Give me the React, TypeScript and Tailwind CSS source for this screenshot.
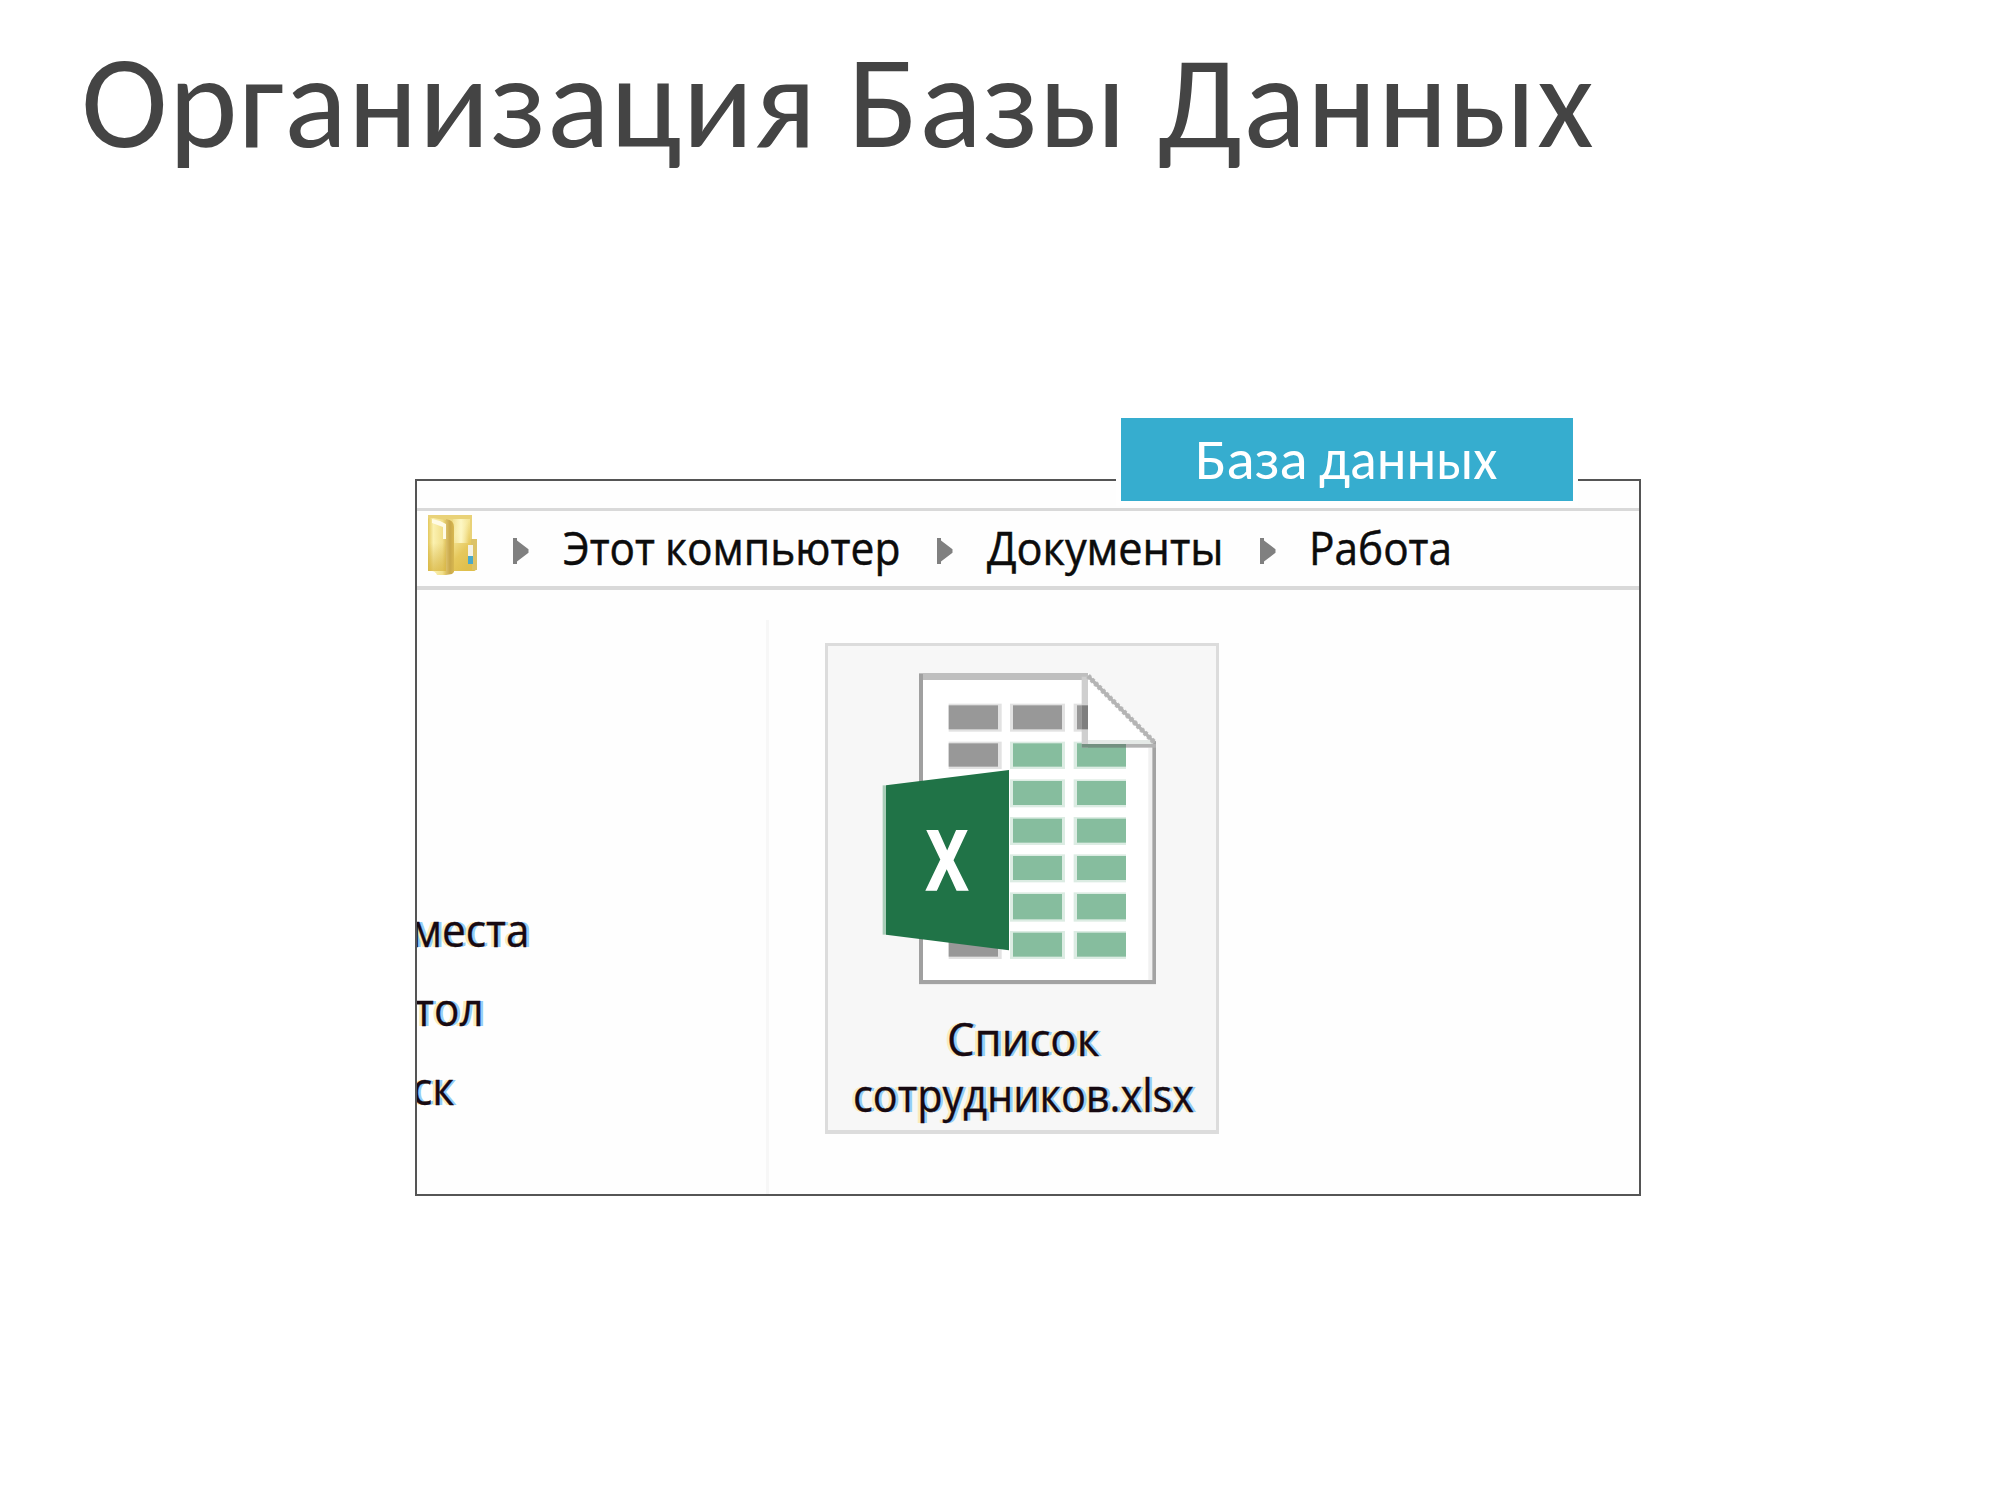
const fringe =
  "[text-shadow:-3px_0_0_#fcebbb,3px_0_0_#93cdf8] text-[#170a12] [-webkit-text-stroke:0.4px_#170a12]";

function Chevron() {
  return (
    <svg className="mt-[27px] h-[26px] w-4 shrink-0" viewBox="0 0 16 26">
      <path d="M0 0H4V2.500L15.500 11.300V14.700L4 23.500V26H0Z" fill="#808080" />
    </svg>
  );
}

function FolderIcon() {
  return (
    <svg className="ml-[11px] mt-1 h-[60px] w-[49px] shrink-0" viewBox="0 0 49 60">
      <defs>
        <linearGradient id="back" x1="0" y1="0" x2="0.6" y2="1">
          <stop offset="0" stopColor="#ecd67c" />
          <stop offset="0.35" stopColor="#f5e698" />
          <stop offset="0.7" stopColor="#e6c85c" />
          <stop offset="1" stopColor="#dfbf4c" />
        </linearGradient>
        <linearGradient id="front" x1="0" y1="0" x2="1" y2="0">
          <stop offset="0" stopColor="#e3c75c" />
          <stop offset="0.3" stopColor="#fbf1b0" />
          <stop offset="0.8" stopColor="#f2e08c" />
          <stop offset="1" stopColor="#dfc360" />
        </linearGradient>
        <linearGradient id="shade" x1="0" y1="0" x2="0" y2="1">
          <stop offset="0" stopColor="#c9a22e" stopOpacity="0" />
          <stop offset="1" stopColor="#d6b23c" stopOpacity="0.7" />
        </linearGradient>
        <linearGradient id="spine" x1="0" y1="0" x2="1" y2="0">
          <stop offset="0" stopColor="#dcc06a" />
          <stop offset="0.5" stopColor="#c9a84a" />
          <stop offset="1" stopColor="#d8b850" />
        </linearGradient>
        <linearGradient id="glow" x1="0" y1="0" x2="1" y2="0">
          <stop offset="0" stopColor="#fdf7c4" stopOpacity="0.2" />
          <stop offset="0.5" stopColor="#fdf7c4" />
          <stop offset="1" stopColor="#fdf7c4" stopOpacity="0" />
        </linearGradient>
      </defs>
      <path d="M0 0H44V56H0Z" fill="#e9d278" />
      <path d="M19 4H42V24H48V54Q48 56 45 56H19Z" fill="url(#back)" />
      <rect x="25" y="4" width="16" height="24" fill="url(#glow)" />
      <path d="M43 24H49V55H44V31H43Z" fill="#dcc267" />
      <path d="M0 4Q1 2 4 3L18 5V60H9Q8 56 0 55Z" fill="url(#front)" />
      <path d="M4 4L12 6L18 9V24H15V12L4 8Z" fill="#fffbe6" />
      <path d="M18 4Q26 5 26 12V57L24 59L18 60Z" fill="url(#spine)" />
      <rect x="0" y="28" width="18" height="28" fill="url(#shade)" />
      <rect x="40" y="30" width="5" height="11" fill="#f4f2e6" />
      <rect x="40" y="41" width="5" height="8" fill="#4aa9c9" />
    </svg>
  );
}

const rows = [
  { y: 226, h: 72, first: "#989898", rest: "#989898" },
  { y: 340, h: 70, first: "#989898", rest: "#86bd9e" },
  { y: 453, h: 72, first: "#989898", rest: "#86bd9e" },
  { y: 566, h: 72, first: "#989898", rest: "#86bd9e" },
  { y: 678, h: 72, first: "#989898", rest: "#86bd9e" },
  { y: 792, h: 76, first: "#989898", rest: "#86bd9e" },
  { y: 908, h: 72, first: "#989898", rest: "#86bd9e" },
];

function SpreadsheetIcon() {
  return (
    <svg className="ml-[54px] mt-[27px] block h-[312px] w-[274px]" viewBox="216 129 822 936">
      <rect x="327" y="1056" width="711" height="9" fill="#ececec" />
      <path d="M327 129H834L1038 333V1061H327Z" fill="#fff" />
      {rows.map((r, i) => (
        <g key={r.y}>
          <g opacity="0.28">
            <rect x="416" y={r.y - 5} width="159" height={r.h + 12} fill={r.first} />
            <rect x="600" y={r.y - 5} width="165" height={r.h + 12} fill={r.rest} />
            <rect x="791" y={r.y - 5} width={i === 0 ? 43 : 157} height={r.h + 12} fill={r.rest} />
          </g>
          <rect x="416" y={r.y} width="148" height={r.h} fill={r.first} />
          <rect x="609" y={r.y} width="147" height={r.h} fill={r.rest} />
          <rect x="801" y={r.y} width={i === 0 ? 33 : 147} height={r.h} fill={r.rest} />
        </g>
      ))}
      <rect x="1015" y="353" width="12" height="697" fill="#f1f1f1" />
      <path d="M834 129L1038 333V342H834Z" fill="#fff" />
      <rect x="327" y="129" width="507" height="21" fill="#bfbfbf" />
      <rect x="327" y="132" width="12" height="929" fill="#a0a0a0" />
      <rect x="327" y="1050" width="711" height="12" fill="#a3a3a3" />
      <rect x="1027" y="333" width="11" height="728" fill="#a3a3a3" />
      <rect x="815" y="140" width="19" height="213" fill="#cfcfcf" />
      <rect x="815" y="226" width="19" height="72" fill="#7f7f7f" />
      <rect x="834" y="330" width="193" height="12" fill="#e4e9e6" />
      <rect x="815" y="342" width="133" height="11" fill="#739080" />
      <rect x="948" y="342" width="90" height="11" fill="#b3b3b3" />
      <path d="M834 138L1034 338" stroke="#bcbcbc" strokeWidth="16" strokeDasharray="9 6" />
      <path d="M834 138L1034 338" stroke="#b4b4b4" strokeWidth="10" />
      <rect x="218" y="466" width="11" height="448" fill="#a9cdb8" />
      <path d="M228 466L597 420V961L228 914Z" fill="#207347" />
      <text
        transform="translate(411 781) scale(0.74 1)"
        textAnchor="middle"
        fontSize="250"
        fontWeight="700"
        fontFamily="Open Sans, sans-serif"
        fill="#fff"
        stroke="#fff"
        strokeWidth="5"
      >
        X
      </text>
    </svg>
  );
}

export default function App() {
  return (
    <main className="h-[1500px] w-[2000px] overflow-hidden bg-white">
      <h1 className="h-[167px] whitespace-nowrap pl-[81px] pt-[37px] font-['Carlito','Lato',sans-serif] text-[131px] leading-none tracking-[0.93px] text-[#444444]">
        Организация Базы Данных
      </h1>

      <section className="relative ml-[415px] mt-[312px] flex h-[717px] w-[1226px] flex-col border-2 border-[#555555] bg-[#fefefe]">
        <nav className="mt-[27px] flex h-[82px] shrink-0 items-start whitespace-nowrap border-b-4 border-t-[3px] border-[#d9d9d9] font-['Open_Sans',sans-serif] text-[46px] leading-none text-[#0c0c0c] [-webkit-text-stroke:0.5px_#0c0c0c]">
          <FolderIcon />
          <div className="ml-[36px] flex">
            <Chevron />
            <span className="ml-[34px] mt-[13px] w-[102px] origin-left scale-x-[0.92]">Этот</span>
            <span className="mt-[13px] w-[272px] origin-left scale-x-[0.925]">компьютер</span>
            <Chevron />
            <span className="ml-[34px] mt-[13px] w-[273px] origin-left scale-x-[0.94]">Документы</span>
            <Chevron />
            <span className="ml-[33px] mt-[13px] w-[160px] origin-left scale-x-[0.92]">Работа</span>
          </div>
        </nav>

        <div className="flex min-h-0 flex-1 font-['Open_Sans',sans-serif] text-[46px]">
          <aside className="mt-[30px] flex w-[352px] flex-col overflow-hidden border-r-[3px] border-[#f7f7f7] pt-[269.5px] leading-[79px]">
            <span className={`-ml-[6px] origin-left scale-x-[0.92] ${fringe}`}>места</span>
            <span className={`-ml-[3px] origin-left scale-x-[0.92] ${fringe}`}>тол</span>
            <span className={`-ml-[5px] origin-left scale-x-[0.92] ${fringe}`}>ск</span>
          </aside>

          <figure className="ml-14 mt-[53px] h-[491px] w-[394px] border-x-[3px] border-b-4 border-t-[3px] border-[#dcdcdc] bg-[#f7f7f7]">
            <SpreadsheetIcon />
            <figcaption className="mt-[24.5px] flex flex-col items-center whitespace-nowrap leading-[56px]">
              <span className={`ml-0.5 scale-x-[0.95] ${fringe}`}>Список</span>
              <span className={`ml-0.5 scale-x-[0.9] ${fringe}`}>сотрудников.xlsx</span>
            </figcaption>
          </figure>
        </div>

        <div className="absolute -top-[68px] left-[699px] flex h-[93px] w-[462px] whitespace-nowrap border-[5px] border-white bg-[#36adcf] pl-[74px] pt-[13.6px] font-['Carlito','Lato',sans-serif] text-[56.5px] leading-none text-white">
          <span className="w-[123.500px] origin-left scale-x-[1.04]">База</span>
          <span className="origin-left scale-x-[0.985]">данных</span>
        </div>
      </section>
    </main>
  );
}
